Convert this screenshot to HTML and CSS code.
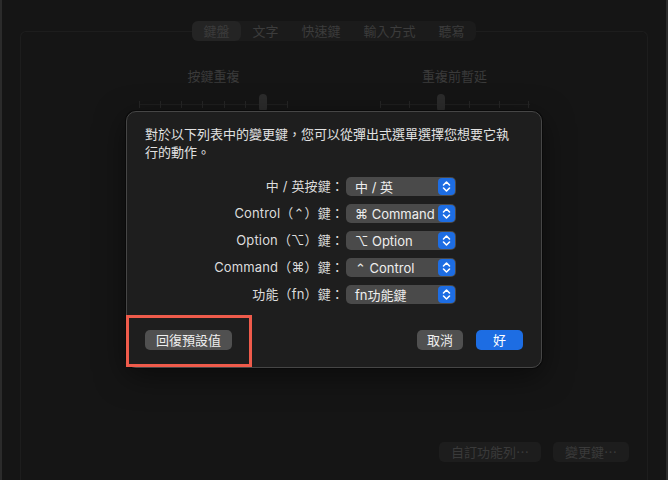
FILE: index.html
```html
<!DOCTYPE html>
<html lang="zh-Hant">
<head>
<meta charset="utf-8">
<link rel="stylesheet" href="styles.css">
</head>
<body>
<div class="window">
  <div class="tabs">
    <span class="tab active">鍵盤</span><span class="tab">文字</span><span class="tab">快速鍵</span><span class="tab">輸入方式</span><span class="tab">聽寫</span>
  </div>
  <div class="box">
    <div class="controls">
      <div class="col">
        <div class="clabel">按鍵重複</div>
        <div class="slider s1">
          <i></i><i></i><i></i><i></i><i></i><i></i><i></i><i></i>
          <span class="knob" style="left:120px"></span>
        </div>
      </div>
      <div class="col">
        <div class="clabel">重複前暫延</div>
        <div class="slider s2">
          <i></i><i></i><i></i><i></i><i></i><i></i>
          <span class="knob" style="left:57px"></span>
        </div>
      </div>
    </div>
    <div class="boxbtns">
      <span class="bbtn">自訂功能列⋯</span>
      <span class="bbtn">變更鍵⋯</span>
    </div>
  </div>
</div>

<div class="dialog">
  <p class="msg">對於以下列表中的變更鍵，您可以從彈出式選單選擇您想要它執行的動作。</p>
  <div class="rows">
    <span class="lbl">中 / 英按鍵：</span>
    <div class="popup"><span>中 / 英</span><span class="chev"><svg width="17" height="17" viewBox="0 0 17 17"><path d="M5.5 7L8.5 4L11.5 7M5.5 10L8.5 13L11.5 10" fill="none" stroke="#fff" stroke-width="1.6" stroke-linecap="round" stroke-linejoin="round"/></svg></span></div>
    <span class="lbl">Control（<span class="sym">⌃</span>）鍵：</span>
    <div class="popup"><span>⌘ Command</span><span class="chev"><svg width="17" height="17" viewBox="0 0 17 17"><path d="M5.5 7L8.5 4L11.5 7M5.5 10L8.5 13L11.5 10" fill="none" stroke="#fff" stroke-width="1.6" stroke-linecap="round" stroke-linejoin="round"/></svg></span></div>
    <span class="lbl">Option（⌥）鍵：</span>
    <div class="popup"><span>⌥ Option</span><span class="chev"><svg width="17" height="17" viewBox="0 0 17 17"><path d="M5.5 7L8.5 4L11.5 7M5.5 10L8.5 13L11.5 10" fill="none" stroke="#fff" stroke-width="1.6" stroke-linecap="round" stroke-linejoin="round"/></svg></span></div>
    <span class="lbl">Command（⌘）鍵：</span>
    <div class="popup"><span><span class="sym">⌃</span> Control</span><span class="chev"><svg width="17" height="17" viewBox="0 0 17 17"><path d="M5.5 7L8.5 4L11.5 7M5.5 10L8.5 13L11.5 10" fill="none" stroke="#fff" stroke-width="1.6" stroke-linecap="round" stroke-linejoin="round"/></svg></span></div>
    <span class="lbl">功能（fn）鍵：</span>
    <div class="popup"><span>fn功能鍵</span><span class="chev"><svg width="17" height="17" viewBox="0 0 17 17"><path d="M5.5 7L8.5 4L11.5 7M5.5 10L8.5 13L11.5 10" fill="none" stroke="#fff" stroke-width="1.6" stroke-linecap="round" stroke-linejoin="round"/></svg></span></div>
  </div>
  <div class="actions">
    <span class="btn">回復預設值</span>
    <span class="btn cancel">取消</span>
    <span class="btn ok">好</span>
  </div>
</div>
<div class="highlight"></div>
</body>
</html>
```

FILE: styles.css
```css
html, body {
  margin: 0;
  padding: 0;
}
body {
  background: #151515;
  width: 668px;
  height: 480px;
  overflow: hidden;
  position: relative;
  font-family: "Inter", "Noto Sans CJK TC", "DejaVu Sans", sans-serif;
  font-size: 13px;
}
.window {
  height: 480px;
  box-sizing: border-box;
  border-left: 2px solid #2b2b2b;
  border-right: 2px solid #2b2b2b;
  padding-top: 21px;
  display: flex;
  flex-direction: column;
  align-items: stretch;
}
.tabs {
  position: relative;
  z-index: 1;
  align-self: center;
  display: flex;
  background: #1b1b1b;
  border-radius: 6px;
  height: 20px;
}
.tab {
  padding: 0 11.5px;
  line-height: 20px;
  color: #3c3c3c;
  border-radius: 6px;
}
.tab.active {
  background: #242424;
}
.box {
  flex: 1;
  margin: -10px 18px 0 18px;
  border: 1px solid #1d1d1d;
  border-bottom: none;
  border-radius: 6px 6px 0 0;
  padding-top: 35px;
  box-sizing: border-box;
  min-height: 0;
}
.controls {
  display: flex;
  justify-content: center;
}
.col {
  width: 241px;
  display: flex;
  flex-direction: column;
  align-items: center;
}
.clabel {
  line-height: 18px;
  color: #3a3a3a;
}
.slider {
  position: relative;
  margin-top: 9px;
  height: 18px;
  display: flex;
  justify-content: space-between;
  align-items: center;
  background: linear-gradient(#1f1f1f, #1f1f1f) center 10px / 100% 1px no-repeat;
}
.slider.s1 { width: 149px; }
.slider.s2 { width: 150px; }
.slider i {
  display: block;
  width: 1px;
  height: 7px;
  margin-top: 3px;
  background: #262626;
}
.knob {
  position: absolute;
  top: 0;
  width: 8px;
  height: 18px;
  border-radius: 4px;
  background: #2c2c2c;
}
.boxbtns {
  display: flex;
  justify-content: flex-end;
  gap: 12px;
  margin-top: 330px;
  padding-right: 18px;
}
.bbtn {
  height: 20px;
  line-height: 20px;
  padding: 0 12px;
  border-radius: 5px;
  background: #1d1d1d;
  color: #3a3a3a;
}

.dialog {
  position: absolute;
  left: 126px;
  top: 111px;
  width: 416px;
  height: 257px;
  box-sizing: border-box;
  background: #1e1e1e;
  border: 1px solid #464646;
  border-radius: 10px;
  box-shadow: 0 0 0 1px #0a0a0a, 0 8px 30px rgba(0,0,0,0.5);
  padding: 13px 18px 17px 18px;
  color: #e2e2e2;
}
.msg {
  margin: 0;
  width: 372px;
  line-height: 18px;
  font-family: "Noto Sans CJK TC", sans-serif;
}
.rows {
  margin-top: 16px;
  display: grid;
  grid-template-columns: 199px 110px;
  column-gap: 2px;
  row-gap: 8px;
  align-items: center;
}
.lbl {
  text-align: right;
  line-height: 19px;
  color: #dcdcdc;
  white-space: nowrap;
  letter-spacing: 0.15px;
}
.sym {
  font-family: "DejaVu Sans", sans-serif;
}
.popup {
  height: 19px;
  box-sizing: border-box;
  border-radius: 5px;
  background: #4a4a4a;
  display: flex;
  align-items: center;
  justify-content: space-between;
  padding: 0 1px 0 9px;
  color: #eeeeee;
  white-space: nowrap;
}
.chev {
  width: 17px;
  height: 17px;
  border-radius: 4px;
  background: #1d6de3;
  display: flex;
  align-items: center;
  justify-content: center;
}
.chev svg { display: block; }
.actions {
  margin-top: 26px;
  display: flex;
  align-items: center;
}
.btn {
  height: 20px;
  line-height: 20px;
  padding: 0 11px;
  border-radius: 5px;
  background: #505050;
  color: #eeeeee;
  text-align: center;
}
.btn.cancel {
  margin-left: auto;
  min-width: 46px;
  box-sizing: border-box;
  padding: 0 10px;
}
.btn.ok {
  margin-left: 13px;
  width: 47px;
  box-sizing: border-box;
  padding: 0;
  background: #1d6de3;
  color: #ffffff;
}
.highlight {
  position: absolute;
  left: 126px;
  top: 315px;
  width: 126px;
  height: 52px;
  box-sizing: border-box;
  border: 3px solid #ef5b4b;
}
```
